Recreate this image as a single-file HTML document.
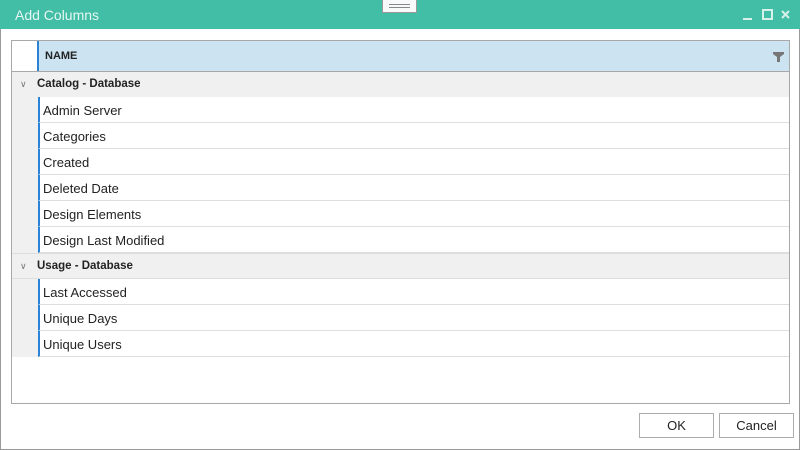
<!DOCTYPE html><html><head><style>
*{margin:0;padding:0;box-sizing:border-box}
body{width:800px;height:450px;position:relative;background:#fff;font-family:"Segoe UI","Liberation Sans",sans-serif;font-size:13px;color:#222;overflow:hidden}
.win{position:absolute;left:0;top:0;width:800px;height:450px;border:1px solid #9a9a9a;border-top:none}
.title{position:absolute;left:0;top:0;width:800px;height:29px;background:#42bda6;color:#e6f6f2;font-size:14px;padding:7px 0 0 15px}
.grip{position:absolute;left:382px;top:0;width:35px;height:13px;background:#f8f9fb;border:1px solid #999;border-top:none}
.grip i{position:absolute;left:6px;width:21px;height:1px;background:#888}
.grid{position:absolute;left:11px;top:40px;width:779px;height:364px;border:1px solid #a8a8a8}
.hdr{position:absolute;left:0;top:0;width:777px;height:31px;background:#cce3f2;border-bottom:1px solid #a8a8a8}
.hdr .l{position:absolute;left:0;top:0;width:27px;height:30px;background:#fff;border-right:2px solid #2b83d6}
.hdr span{position:absolute;left:33px;top:9px;font-size:11px;font-weight:bold}
.row{position:absolute;left:0;width:777px;height:26px}
.g{background:#f0f0f0;border-bottom:1px solid #ddd}
.g span{position:absolute;left:25px;top:6px;font-size:11.5px;font-weight:bold}
.g b{position:absolute;left:8px;top:7px;font-size:9px;color:#777;font-weight:normal}
.it{background:#f0f0f0}
.it div{position:absolute;left:26px;top:0;width:751px;height:26px;background:#fff;border-left:2px solid #2b83d6;border-bottom:1px solid #ddd;padding:6px 0 0 3px}
.btn{position:absolute;top:413px;width:75px;height:25px;border:1px solid #adadad;background:#fff;text-align:center;padding-top:4px}
</style></head><body>
<div class="win"></div>
<div class="title">Add Columns</div>
<div class="grip"><i style="top:4px"></i><i style="top:7px"></i></div>
<svg style="position:absolute;left:740px;top:8px" width="56" height="14">
<rect x="3" y="10" width="9" height="2" fill="#d6f1ea"/>
<rect x="23" y="2" width="9" height="9" fill="none" stroke="#d6f1ea" stroke-width="2"/>
<path d="M42 3l7 7M49 3l-7 7" stroke="#d6f1ea" stroke-width="2"/>
</svg>
<div class="grid">
<div class="hdr"><div class="l"></div><span>NAME</span>
<svg style="position:absolute;left:761px;top:11px" width="11" height="10"><path d="M0 0h11v2l-4 3v5h-3v-5l-4-3z" fill="#777"/></svg></div>
<div class="row g" style="top:31px"><b>&#8744;</b><span>Catalog - Database</span></div>
<div class="row it" style="top:56px"><div>Admin Server</div></div>
<div class="row it" style="top:82px"><div>Categories</div></div>
<div class="row it" style="top:108px"><div>Created</div></div>
<div class="row it" style="top:134px"><div>Deleted Date</div></div>
<div class="row it" style="top:160px"><div>Design Elements</div></div>
<div class="row it" style="top:186px"><div>Design Last Modified</div></div>
<div class="row g" style="top:212px;border-top:1px solid #ddd;height:26px"><b>&#8744;</b><span>Usage - Database</span></div>
<div class="row it" style="top:238px"><div>Last Accessed</div></div>
<div class="row it" style="top:264px"><div>Unique Days</div></div>
<div class="row it" style="top:290px"><div>Unique Users</div></div>
</div>
<div class="btn" style="left:639px">OK</div>
<div class="btn" style="left:719px">Cancel</div>
</body></html>
